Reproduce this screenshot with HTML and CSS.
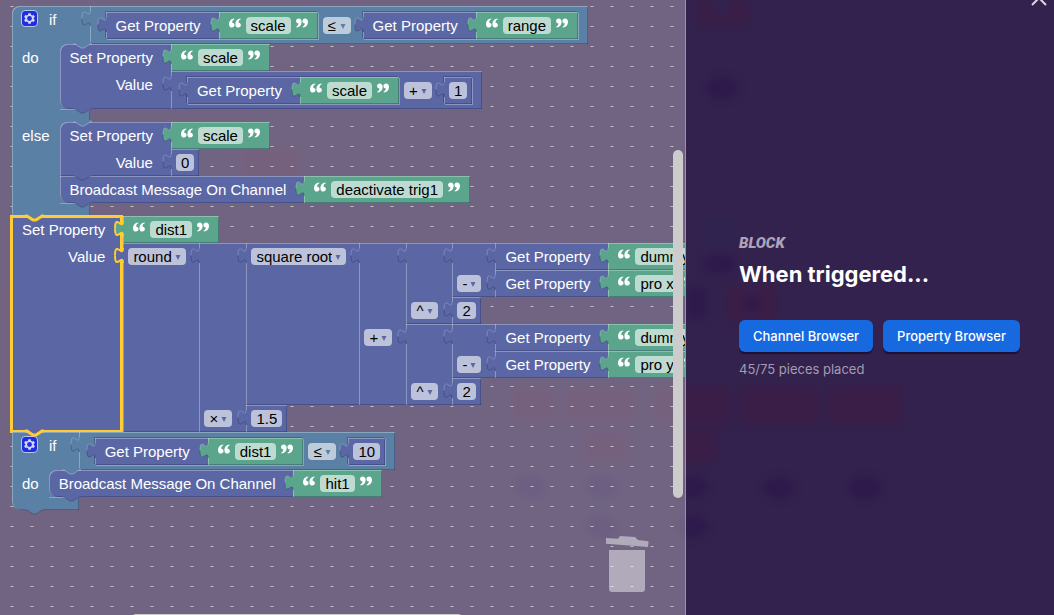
FILE: index.html
```html
<!DOCTYPE html>
<html lang="en">
<head>
<meta charset="utf-8">
<title>Block editor</title>
<link rel="stylesheet" href="styles.css">
</head>
<body>
<svg class="defs" width="0" height="0" aria-hidden="true">
  <symbol id="tab" viewBox="0 0 12 17">
    <path stroke="none" d="M12,0 H9 C9,10 1,-8 1,7.5 C1,23 9,5 9,15 H12 Z"/>
    <path class="tab-upper" fill="none" d="M9,0 C9,10 1,-8 1,7.5"/>
    <path class="tab-lower" fill="none" d="M1,7.5 C1,23 9,5 9,15"/>
  </symbol>
  <symbol id="bump" viewBox="0 0 19 8">
    <path stroke="none" d="M0,0 H19 V2 H17 L11,6 H8 L2,2 H0 Z"/>
    <path fill="none" d="M0,2 H2 L8,6 H11 L17,2 H19"/>
  </symbol>
  <symbol id="quote" viewBox="0 0 13 10">
    <path d="M5.6,0 C2,.4 0,2.8 0,6 C0,8.6 1.2,10 3.2,10 C4.9,10 6,8.9 6,7.3 C6,5.8 5,4.7 3.5,4.7 C3.4,3 4.2,1.6 5.9,1 Z M12.5,0 C8.9,.4 6.9,2.8 6.9,6 C6.9,8.6 8.1,10 10.1,10 C11.8,10 12.9,8.9 12.9,7.3 C12.9,5.8 11.9,4.7 10.4,4.7 C10.3,3 11.1,1.6 12.8,1 Z"/>
  </symbol>
  <symbol id="arrow" viewBox="0 0 6 6"><path d="M0.5,1 H5.5 L3,6 Z"/></symbol>
  <symbol id="gear" viewBox="0 0 17 17">
    <rect x=".5" y=".5" width="16" height="16" rx="3.5" fill="#1f2fe0" stroke="#b9c4ee"/>
    <path fill="#d3d9f5" d="M7.3,3.2 H9.7 L10,4.8 L11.2,5.5 L12.7,4.9 L13.9,7 L12.7,8 V9 L13.9,10 L12.7,12.1 L11.2,11.5 L10,12.2 L9.7,13.8 H7.3 L7,12.2 L5.8,11.5 L4.3,12.1 L3.1,10 L4.3,9 V8 L3.1,7 L4.3,4.9 L5.8,5.5 L7,4.8 Z"/>
    <circle cx="8.5" cy="8.5" r="2.4" fill="#1f2fe0"/>
  </symbol>
</svg>

<svg class="scenery" aria-hidden="true">
  <g fill="#46193f">
    <rect x="699" y="0" width="48" height="24"/><rect x="728" y="286" width="48" height="35"/>
    <rect x="510" y="387" width="45" height="36"/><rect x="564" y="387" width="74" height="36"/>
    <rect x="652" y="387" width="78" height="36"/><rect x="740" y="387" width="78" height="36"/><rect x="828" y="387" width="73" height="36"/>
    <rect x="582" y="430" width="46" height="32"/><rect x="670" y="430" width="46" height="32"/>
    <rect x="240" y="145" width="60" height="35"/><rect x="0" y="280" width="7" height="50"/>
  </g>
  <g fill="#27104c">
    <ellipse cx="722" cy="88" rx="17" ry="12"/><ellipse cx="719" cy="264" rx="17" ry="11"/>
    <rect x="686" y="287" width="22" height="32"/><circle cx="752" cy="303" r="8"/>
    <ellipse cx="531" cy="487" rx="17" ry="12"/><ellipse cx="602" cy="487" rx="17" ry="12"/>
    <ellipse cx="602" cy="527" rx="17" ry="12"/><ellipse cx="692" cy="487" rx="17" ry="12"/>
    <ellipse cx="692" cy="527" rx="17" ry="12"/><ellipse cx="779" cy="488" rx="17" ry="12"/><ellipse cx="865" cy="488" rx="17" ry="12"/>
  </g>
  <g fill="#2d2655"><circle cx="719" cy="232" r="16"/><circle cx="722" cy="7" r="8"/></g>
</svg>

<div class="app">
<main class="workspace" aria-label="Block workspace">
  <div class="stack">

    <div class="branch logic top">
      <div class="cell first head"><svg class="gear"><use href="#gear"/></svg><span>if</span></div>
      <div class="slot">
        <div class="block logic">
          <svg class="tab"><use href="#tab"/></svg>
          <div class="cell first last leaf inline">
            <div class="block prop">
              <svg class="tab"><use href="#tab"/></svg>
              <div class="cell first last label">Get Property</div>
              <div class="slot"><div class="block text"><svg class="tab"><use href="#tab"/></svg><div class="cell first last leaf quoted"><svg class="quote"><use href="#quote"/></svg><input class="field" aria-label="Text" value="scale" size="5"><svg class="quote close"><use href="#quote"/></svg></div></div></div>
            </div>
            <span class="pick"><select aria-label="Comparison"><option>≤</option></select><svg><use href="#arrow"/></svg></span>
            <div class="block prop">
              <svg class="tab"><use href="#tab"/></svg>
              <div class="cell first last label">Get Property</div>
              <div class="slot"><div class="block text"><svg class="tab"><use href="#tab"/></svg><div class="cell first last leaf quoted"><svg class="quote"><use href="#quote"/></svg><input class="field" aria-label="Text" value="range" size="5"><svg class="quote close"><use href="#quote"/></svg></div></div></div>
            </div>
          </div>
        </div>
      </div>
      <div class="cell spine">do</div>
      <div class="body">
        <svg class="bump notch"><use href="#bump"/></svg>
        <div class="block prop step">
          <div class="cell first label">Set Property</div>
          <div class="slot"><div class="block text"><svg class="tab"><use href="#tab"/></svg><div class="cell first last leaf quoted"><svg class="quote"><use href="#quote"/></svg><input class="field" aria-label="Text" value="scale" size="5"><svg class="quote close"><use href="#quote"/></svg></div></div></div>
          <div class="cell last label">Value</div>
          <div class="slot">
            <div class="block prop">
              <svg class="tab"><use href="#tab"/></svg>
              <div class="cell first last leaf inline">
                <div class="block prop">
                  <svg class="tab"><use href="#tab"/></svg>
                  <div class="cell first last label">Get Property</div>
                  <div class="slot"><div class="block text"><svg class="tab"><use href="#tab"/></svg><div class="cell first last leaf quoted"><svg class="quote"><use href="#quote"/></svg><input class="field" aria-label="Text" value="scale" size="5"><svg class="quote close"><use href="#quote"/></svg></div></div></div>
                </div>
                <span class="pick"><select aria-label="Operation"><option>+</option></select><svg><use href="#arrow"/></svg></span>
                <div class="block prop"><svg class="tab"><use href="#tab"/></svg><div class="cell first last leaf number"><input class="field" aria-label="Number" value="1" size="1"></div></div>
              </div>
            </div>
          </div>
          <svg class="bump"><use href="#bump"/></svg>
        </div>
      </div>
      <div class="cell foot"></div>
      <div class="cell spine">else</div>
      <div class="body">
        <svg class="bump notch"><use href="#bump"/></svg>
        <div class="block prop step">
          <div class="cell first label">Set Property</div>
          <div class="slot"><div class="block text"><svg class="tab"><use href="#tab"/></svg><div class="cell first last leaf quoted"><svg class="quote"><use href="#quote"/></svg><input class="field" aria-label="Text" value="scale" size="5"><svg class="quote close"><use href="#quote"/></svg></div></div></div>
          <div class="cell last label">Value</div>
          <div class="slot"><div class="block prop"><svg class="tab"><use href="#tab"/></svg><div class="cell first last leaf number"><input class="field" aria-label="Number" value="0" size="1"></div></div></div>
          <svg class="bump"><use href="#bump"/></svg>
        </div>
        <div class="block prop step">
          <div class="cell first last label">Broadcast Message On Channel</div>
          <div class="slot"><div class="block text"><svg class="tab"><use href="#tab"/></svg><div class="cell first last leaf quoted"><svg class="quote"><use href="#quote"/></svg><input class="field" aria-label="Text" value="deactivate trig1" size="16"><svg class="quote close"><use href="#quote"/></svg></div></div></div>
          <svg class="bump"><use href="#bump"/></svg>
        </div>
      </div>
      <div class="cell foot last"></div>
    </div>

    <div class="block prop selected">
      <div class="cell first label">Set Property</div>
      <div class="slot"><div class="block text"><svg class="tab"><use href="#tab"/></svg><div class="cell first last leaf quoted"><svg class="quote"><use href="#quote"/></svg><input class="field" aria-label="Text" value="dist1" size="5"><svg class="quote close"><use href="#quote"/></svg></div></div></div>
      <div class="cell last label">Value</div>
      <div class="slot">
        <div class="block prop">
          <svg class="tab"><use href="#tab"/></svg>
          <div class="cell first last op fn"><span class="pick"><select aria-label="Rounding"><option>round</option></select><svg><use href="#arrow"/></svg></span></div>
          <div class="slot">
            <div class="block prop">
              <svg class="tab"><use href="#tab"/></svg>
              <div class="cell first op"></div>
              <div class="slot">
                <div class="block prop">
                  <svg class="tab"><use href="#tab"/></svg>
                  <div class="cell first last op fn"><span class="pick"><select aria-label="Function"><option>square root</option></select><svg><use href="#arrow"/></svg></span></div>
                  <div class="slot">
                    <div class="block prop">
                      <svg class="tab"><use href="#tab"/></svg>
                      <div class="cell first op"></div>
                      <div class="slot">
                        <div class="block prop">
                          <svg class="tab"><use href="#tab"/></svg>
                          <div class="cell first op"></div>
                          <div class="slot">
                            <div class="block prop">
                              <svg class="tab"><use href="#tab"/></svg>
                              <div class="cell first op"></div>
                              <div class="slot"><div class="block prop"><svg class="tab"><use href="#tab"/></svg><div class="cell first last label">Get Property</div><div class="slot"><div class="block text"><svg class="tab"><use href="#tab"/></svg><div class="cell first last leaf quoted"><svg class="quote"><use href="#quote"/></svg><input class="field" aria-label="Text" value="dummy x" size="7"><svg class="quote close"><use href="#quote"/></svg></div></div></div></div></div>
                              <div class="cell last op"><span class="pick"><select aria-label="Operation"><option>-</option></select><svg><use href="#arrow"/></svg></span></div>
                              <div class="slot"><div class="block prop"><svg class="tab"><use href="#tab"/></svg><div class="cell first last label">Get Property</div><div class="slot"><div class="block text"><svg class="tab"><use href="#tab"/></svg><div class="cell first last leaf quoted"><svg class="quote"><use href="#quote"/></svg><input class="field" aria-label="Text" value="pro x" size="5"><svg class="quote close"><use href="#quote"/></svg></div></div></div></div></div>
                            </div>
                          </div>
                          <div class="cell last op"><span class="pick"><select aria-label="Operation"><option>^</option></select><svg><use href="#arrow"/></svg></span></div>
                          <div class="slot"><div class="block prop"><svg class="tab"><use href="#tab"/></svg><div class="cell first last leaf number"><input class="field" aria-label="Number" value="2" size="1"></div></div></div>
                        </div>
                      </div>
                      <div class="cell last op"><span class="pick"><select aria-label="Operation"><option>+</option></select><svg><use href="#arrow"/></svg></span></div>
                      <div class="slot">
                        <div class="block prop">
                          <svg class="tab"><use href="#tab"/></svg>
                          <div class="cell first op"></div>
                          <div class="slot">
                            <div class="block prop">
                              <svg class="tab"><use href="#tab"/></svg>
                              <div class="cell first op"></div>
                              <div class="slot"><div class="block prop"><svg class="tab"><use href="#tab"/></svg><div class="cell first last label">Get Property</div><div class="slot"><div class="block text"><svg class="tab"><use href="#tab"/></svg><div class="cell first last leaf quoted"><svg class="quote"><use href="#quote"/></svg><input class="field" aria-label="Text" value="dummy y" size="7"><svg class="quote close"><use href="#quote"/></svg></div></div></div></div></div>
                              <div class="cell last op"><span class="pick"><select aria-label="Operation"><option>-</option></select><svg><use href="#arrow"/></svg></span></div>
                              <div class="slot"><div class="block prop"><svg class="tab"><use href="#tab"/></svg><div class="cell first last label">Get Property</div><div class="slot"><div class="block text"><svg class="tab"><use href="#tab"/></svg><div class="cell first last leaf quoted"><svg class="quote"><use href="#quote"/></svg><input class="field" aria-label="Text" value="pro y" size="5"><svg class="quote close"><use href="#quote"/></svg></div></div></div></div></div>
                            </div>
                          </div>
                          <div class="cell last op"><span class="pick"><select aria-label="Operation"><option>^</option></select><svg><use href="#arrow"/></svg></span></div>
                          <div class="slot"><div class="block prop"><svg class="tab"><use href="#tab"/></svg><div class="cell first last leaf number"><input class="field" aria-label="Number" value="2" size="1"></div></div></div>
                        </div>
                      </div>
                    </div>
                  </div>
                </div>
              </div>
              <div class="cell last op"><span class="pick"><select aria-label="Operation"><option>×</option></select><svg><use href="#arrow"/></svg></span></div>
              <div class="slot"><div class="block prop"><svg class="tab"><use href="#tab"/></svg><div class="cell first last leaf number"><input class="field" aria-label="Number" value="1.5" size="3"></div></div></div>
            </div>
          </div>
        </div>
      </div>
      <div class="ring"><svg class="bump ring-top"><use href="#bump"/></svg><svg class="bump ring-bottom"><use href="#bump"/></svg></div>
    </div>

    <div class="branch logic">
      <div class="cell first head"><svg class="gear"><use href="#gear"/></svg><span>if</span></div>
      <div class="slot">
        <div class="block logic">
          <svg class="tab"><use href="#tab"/></svg>
          <div class="cell first last leaf inline">
            <div class="block prop">
              <svg class="tab"><use href="#tab"/></svg>
              <div class="cell first last label">Get Property</div>
              <div class="slot"><div class="block text"><svg class="tab"><use href="#tab"/></svg><div class="cell first last leaf quoted"><svg class="quote"><use href="#quote"/></svg><input class="field" aria-label="Text" value="dist1" size="5"><svg class="quote close"><use href="#quote"/></svg></div></div></div>
            </div>
            <span class="pick"><select aria-label="Comparison"><option>≤</option></select><svg><use href="#arrow"/></svg></span>
            <div class="block prop"><svg class="tab"><use href="#tab"/></svg><div class="cell first last leaf number"><input class="field" aria-label="Number" value="10" size="2"></div></div>
          </div>
        </div>
      </div>
      <div class="cell spine">do</div>
      <div class="body">
        <svg class="bump notch"><use href="#bump"/></svg>
        <div class="block prop step">
          <div class="cell first last label">Broadcast Message On Channel</div>
          <div class="slot"><div class="block text"><svg class="tab"><use href="#tab"/></svg><div class="cell first last leaf quoted"><svg class="quote"><use href="#quote"/></svg><input class="field" aria-label="Text" value="hit1" size="4"><svg class="quote close"><use href="#quote"/></svg></div></div></div>
          <svg class="bump"><use href="#bump"/></svg>
        </div>
      </div>
      <div class="cell foot last end"></div>
      <svg class="bump"><use href="#bump"/></svg>
    </div>
  </div>

  <svg class="trash" viewBox="0 0 43 56" role="img" aria-label="Trash">
    <path d="M0,2 L12,2.7 L14,0 L29,1 L32,4 L42.6,5.3 L42,11 L0,7.7 Z M3,14 H39 V53 Q39,56 36,56 H6 Q3,56 3,53 Z"/>
  </svg>
  <div class="bar-v"></div>
  <div class="bar-h"></div>
</main>

<aside class="panel">
  <button class="close" aria-label="Close"><svg viewBox="0 0 16 16"><path d="M1,1 L15,15 M15,1 L1,15"/></svg></button>
  <p class="kind">Block</p>
  <h1>When triggered...</h1>
  <div class="actions">
    <button class="action">Channel Browser</button>
    <button class="action">Property Browser</button>
  </div>
  <p class="count">45/75 pieces placed</p>
</aside>
</div>
</body>
</html>
```
FILE: styles.css
```css
* { box-sizing: border-box; }
body {
  margin: 0;
  background: #33224d;
  font-family: "Inter", sans-serif;
  overflow: hidden;
}
.defs { position: absolute; }
.scenery {
  position: absolute;
  inset: 0;
  width: 100%;
  height: 100%;
  filter: blur(4px);
  opacity: .4;
}
.app {
  position: relative;
  display: grid;
  grid-template-columns: 1fr 368px;
  height: 100vh;
}

/* Workspace */
.workspace {
  --light: rgba(255, 255, 255, .3);
  --dark: rgba(20, 20, 60, .27);
  position: relative;
  overflow: hidden;
  padding: 6px 0 0 12px;
  border-right: 1px solid #9a90a8;
  background:
    conic-gradient(from 0deg at 2px 1px, transparent 75%, #c2bec0 0) 11px 6px / 20px 20px,
    conic-gradient(from 0deg at 4px 1px, transparent 75%, rgba(200, 196, 200, .45) 0) 10px 6px / 20px 20px,
    rgba(255, 255, 255, .3);
  color: #fff;
  font: 15px/27px "Liberation Sans", Arial, sans-serif;
}
.stack { width: max-content; }
.logic { --c: #5b80a5; }
.prop { --c: #5b67a5; }
.text { --c: #5ba58c; }

.block {
  position: relative;
  display: grid;
  grid-template-columns: auto auto;
  justify-content: start;
}
.branch {
  position: relative;
  display: grid;
  grid-template-columns: auto 30px auto;
  justify-content: start;
}
.head { grid-column: 1 / 3; }
.spine { grid-column: 1; }
.body { grid-column: 2 / 4; }
.foot { grid-column: 1 / 3; height: 13px; }
.branch > .slot { grid-column: 3; }

.cell {
  --t: 0px;
  --b: 0px;
  --r: 0px;
  display: flex;
  min-height: 27px;
  background: var(--c);
  white-space: nowrap;
  box-shadow:
    inset 1px 0 var(--light),
    inset 0 var(--t) var(--light),
    inset 0 var(--b) var(--dark),
    inset var(--r) 0 var(--dark);
}
.first { --t: 1px; }
.last { --b: -1px; }
.leaf { --r: -1px; grid-column: 1 / 3; }
.label { justify-content: flex-end; padding: 0 18px 0 10px; }
.head { gap: 11px; padding-left: 9px; }
.spine { padding: 0 10px; }
.cell.foot { min-height: 13px; --r: -1px; }
.top > .first { border-top-left-radius: 8px; }
.end { border-bottom-left-radius: 8px; }
.gear { width: 17px; height: 17px; margin-top: 4px; }

.op { padding: 5px 14px 0 5px; }
.op.fn { padding-right: 13px; }
.number { padding: 5px; }
.quoted { gap: 5px; padding: 5px 10px; }
.quote { width: 12px; height: 10px; margin-top: 1px; fill: #fff; }
.close.quote { transform: rotate(180deg); }
.inline { align-items: center; gap: 5px; height: 38px; padding: 0 10px 0 16px; }
.inline > .pick + .block { margin-left: 7px; }
.inline > .block { box-shadow: -1px -1px 0 var(--dark), 1px 1px 0 var(--light); }

.field, .pick select {
  display: block;
  height: 17px;
  margin: 0;
  border: 0;
  border-radius: 4px;
  background: rgba(255, 255, 255, .6);
  color: #000;
  font: 15px/17px "Liberation Sans", Arial, sans-serif;
}
.field { field-sizing: content; padding: 0 5px; text-align: center; }
.pick { position: relative; display: block; height: 17px; }
.pick select { appearance: none; padding: 0 14px 0 5px; }
.pick svg {
  position: absolute;
  right: 5px;
  top: 6px;
  width: 6px;
  height: 6px;
  fill: var(--c);
  pointer-events: none;
}

/* Connectors */
.tab {
  --upper: rgba(255, 255, 255, .22);
  --lower: var(--dark);
  position: absolute;
  left: -9px;
  top: 5px;
  width: 12px;
  height: 17px;
  fill: var(--c);
}
.tab-upper { stroke: var(--upper); }
.tab-lower { stroke: var(--lower); }
.bump {
  position: absolute;
  z-index: 2;
  left: 13px;
  bottom: -6px;
  width: 19px;
  height: 8px;
  fill: var(--c);
  stroke: var(--dark);
}
.notch { top: -2px; bottom: auto; stroke: var(--light); }
.body {
  position: relative;
  background:
    linear-gradient(var(--c), var(--c)) 0 0 / 9px 9px no-repeat,
    radial-gradient(circle at 100% 0, transparent 9px, #a9bacb 10px, var(--c) 11px) 0 100% / 11px 11px no-repeat;
}
.notch + .step > .first { border-top-left-radius: 8px; }
.step:nth-last-child(1) > .cell.last { border-bottom-left-radius: 8px; }
.body + .foot::before {
  content: "";
  width: 30px;
  height: 1px;
  margin-left: auto;
  background: var(--light);
}

/* Selection outline follows the label column of the block */
.ring {
  position: relative;
  grid-area: 1 / 1 / 3 / 2;
  margin: -1px 0 -1px -2px;
  border: 3px solid #fc3;
  pointer-events: none;
}
.ring .bump { left: 12px; stroke: #fc3; stroke-width: 3px; overflow: visible; }
.ring .ring-top { --c: #5b80a5; top: -4px; bottom: auto; }
.ring .ring-bottom { bottom: -7px; }
.selected > .slot > .block > .tab {
  --upper: #fc3;
  --lower: #fc3;
  z-index: 1;
  overflow: visible;
  stroke-width: 2px;
}
.selected > .cell.first { grid-area: 1 / 1; }
.selected > .cell.last { grid-area: 2 / 1; }
.selected > .slot { grid-column: 2; }

.trash {
  position: absolute;
  right: 36px;
  bottom: 23px;
  width: 43px;
  height: 56px;
  fill: rgba(255, 255, 255, .45);
}
.bar-v {
  position: absolute;
  right: 2px;
  top: 150px;
  z-index: 3;
  width: 10px;
  height: 348px;
  border-radius: 5px;
  background: #ccc;
}
.bar-h {
  position: absolute;
  left: 131px;
  bottom: -9px;
  width: 332px;
  height: 10px;
  border-radius: 5px;
  background: #ccc;
}

/* Side panel */
.panel {
  position: relative;
  display: flex;
  flex-direction: column;
  justify-content: center;
  padding: 0 34px 4px 53px;
}
.kind {
  margin: 0;
  color: #ada4b8;
  font: italic 900 15px/18px Roboto, sans-serif;
  text-transform: uppercase;
}
h1 {
  margin: 6px 0 30px;
  color: #fff;
  font-size: 22px;
  line-height: 32px;
  font-weight: 700;
  white-space: nowrap;
}
.actions { display: flex; gap: 10px; }
.action {
  flex: 1 1 auto;
  height: 32px;
  padding: 0;
  border: 0;
  border-radius: 6px;
  background: #1769e0;
  box-shadow: 0 2px 1px rgba(20, 8, 40, .7);
  color: #fff;
  font: 500 13px/32px Inter, sans-serif;
  white-space: nowrap;
}
.count { margin: 8px 0 0; color: #a59cb0; font-size: 13px; line-height: 18px; }
button.close {
  position: absolute;
  right: 7px;
  top: -10px;
  width: 16px;
  height: 16px;
  padding: 0;
  border: 0;
  background: none;
}
button.close svg { display: block; fill: none; stroke: #ddd8e4; stroke-width: 2; }
```
